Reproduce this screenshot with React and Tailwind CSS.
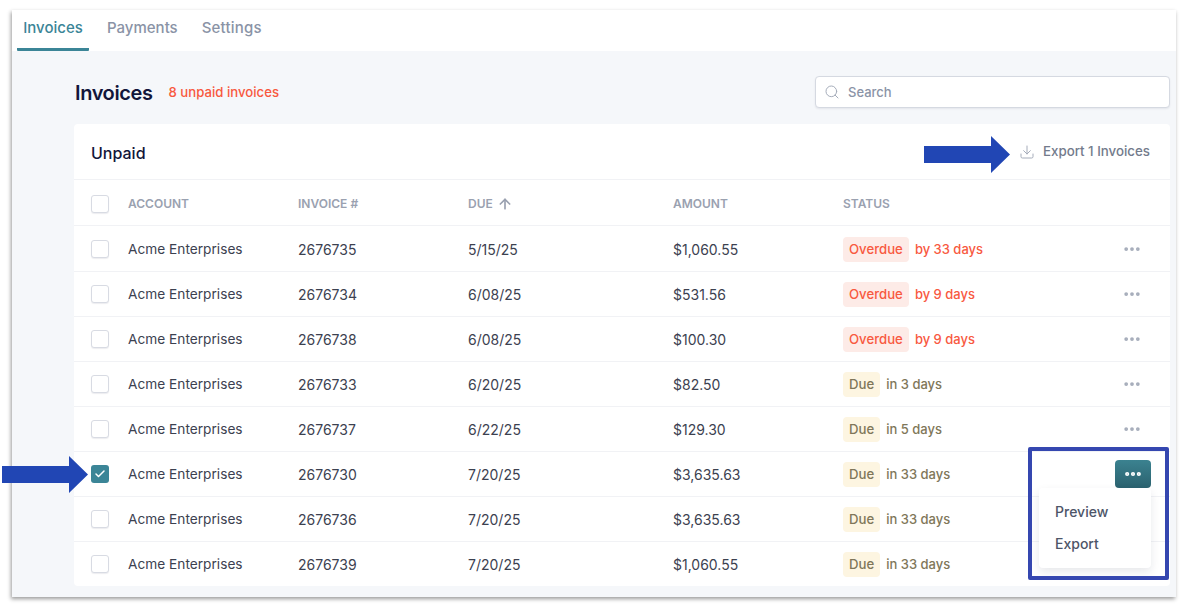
import React from 'react';
import { ArrowUp, Check, Download, MoreHorizontal, Search } from 'lucide-react';

const rows = [
  { id: '2676735', due: '5/15/25', amount: '$1,060.55', status: 'Overdue', note: 'by 33 days', height: 'h-[46px] pt-[1px]' },
  { id: '2676734', due: '6/08/25', amount: '$531.56', status: 'Overdue', note: 'by 9 days' },
  { id: '2676738', due: '6/08/25', amount: '$100.30', status: 'Overdue', note: 'by 9 days' },
  { id: '2676733', due: '6/20/25', amount: '$82.50', status: 'Due', note: 'in 3 days' },
  { id: '2676737', due: '6/22/25', amount: '$129.30', status: 'Due', note: 'in 5 days' },
  { id: '2676730', due: '7/20/25', amount: '$3,635.63', status: 'Due', note: 'in 33 days', checked: true, open: true },
  { id: '2676736', due: '7/20/25', amount: '$3,635.63', status: 'Due', note: 'in 33 days', hideDots: true },
  { id: '2676739', due: '7/20/25', amount: '$1,060.55', status: 'Due', note: 'in 33 days', hideDots: true, height: 'h-[44px]' },
];

function Checkbox({ checked }) {
  if (checked) {
    return (
      <span className="flex h-[18px] w-[18px] items-center justify-center rounded-[3px] bg-[#3b8597]">
        <Check size={12} strokeWidth={3} className="text-white" />
      </span>
    );
  }
  return <span className="block h-[18px] w-[18px] rounded-[3px] border border-[#d8dbe3] bg-white shadow-[0_1px_1px_rgba(20,30,60,0.08)]"></span>;
}

function Arrow({ className }) {
  return (
    <svg className={className} width="86" height="37" viewBox="0 0 86 37">
      <path d="M0 10H67V0L86 18.5L67 37V27H0Z" fill="#2146b4" />
    </svg>
  );
}

export default function App() {
  return (
    <div className="relative h-[613px] w-[1199px] overflow-hidden bg-white font-['Inter',sans-serif] text-[14px]">
      <div className="ml-3 mt-[10px] h-[587px] w-[1164px] bg-[#f5f7fa] shadow-[-1px_2px_4px_rgba(0,0,0,0.4)]">
        {/* Tabs */}
        <div className="flex h-[41px] gap-[24px] bg-white pl-[5px] text-[15px] font-medium text-[#8a93a6]">
          <div className="flex w-[72px] justify-center rounded-b-[1px] border-b-[3px] border-[#3b8597] pt-[7px] text-[#3b8597]">Invoices</div>
          <div className="-ml-[6px] pt-[7px]">Payments</div>
          <div className="pt-[7px] tracking-[0.2px]">Settings</div>
        </div>

        <div className="pl-[62px] pr-[6px]">
          {/* Title row */}
          <div className="flex h-[73px] items-center justify-between pt-[9px]">
            <div className="flex items-center gap-[16px] pl-[1px] pt-[2px]">
              <h1 className="text-[20px] font-semibold tracking-[-0.4px] text-[#12163a]">Invoices</h1>
              <span className="text-[13.2px] font-medium text-[#f8593f]">8 unpaid invoices</span>
            </div>
            <div className="flex h-[32px] w-[355px] items-center gap-[8px] rounded-[4px] border border-[#d5d9e1] bg-white pl-[8px] text-[13px] font-medium text-[#8a93a6] shadow-[0_1px_2px_rgba(20,30,60,0.08)]">
              <Search size={16} strokeWidth={1.5} className="text-[#a5acba]" />
              <span className="pt-[2px]">Search</span>
            </div>
          </div>

          {/* Card */}
          <div className="h-[462px] rounded-[4px] bg-white">
            <div className="flex h-[56px] items-center justify-between border-b border-[#f1f2f5] pl-[17px] pr-[20px]">
              <h2 className="pt-[2px] text-[16px] font-medium text-[#12163a]">Unpaid</h2>
              <div className="flex items-center gap-[8px] text-[13.3px] font-medium text-[#737b8c]">
                <Download size={16} strokeWidth={1.5} className="text-[#a5acba]" />
                Export 1 Invoices
              </div>
            </div>

            <div className="grid h-[46px] grid-cols-[37px_170px_170px_205px_170px_1fr] items-center border-b border-[#f1f2f5] pl-[17px] pt-[2px] text-[12px] font-semibold text-[#9aa1b0]">
              <Checkbox />
              <div>ACCOUNT</div>
              <div>INVOICE #</div>
              <div className="flex items-center gap-[4px]">DUE <ArrowUp size={16} strokeWidth={2.5} /></div>
              <div>AMOUNT</div>
              <div>STATUS</div>
            </div>

            {rows.map((row, i) => (
              <div key={row.id} className={`relative grid grid-cols-[37px_170px_170px_205px_170px_1fr] items-center pl-[17px] text-[#3c4150] ${row.height || 'h-[45px]'} ${i < rows.length - 1 ? 'border-b border-[#f1f2f5]' : ''}`}>
                <Checkbox checked={row.checked} />
                <div className="text-[13.7px]">Acme Enterprises</div>
                <div>{row.id}</div>
                <div>{row.due}</div>
                <div>{row.amount}</div>
                <div className="flex items-center justify-between pr-[28px]">
                  <div className="flex items-center gap-[6px] pt-[1px] text-[13px] font-medium">
                    {row.status === 'Overdue' ? (
                      <>
                        <span className="rounded-[4px] bg-[#fdebe7] px-[6px] py-[3px] text-[13.2px] text-[#f8593f]">Overdue</span>
                        <span className="text-[#f8593f]">{row.note}</span>
                      </>
                    ) : (
                      <>
                        <span className="rounded-[4px] bg-[#fdf5e1] px-[6px] py-[3px] text-[13.2px] text-[#7f7759]">Due</span>
                        <span className="text-[#7f7759]">{row.note}</span>
                      </>
                    )}
                  </div>
                  {!row.open && !row.hideDots && <MoreHorizontal size={20} strokeWidth={2.5} className="text-[#a5acba]" />}
                </div>
              </div>
            ))}
          </div>
        </div>
      </div>

      {/* Row menu */}
      <div className="absolute left-[1115px] top-[460px] flex h-[28px] w-[36px] items-center justify-center rounded-[4px] bg-gradient-to-b from-[#3b8290] to-[#2b626f] text-white">
        <MoreHorizontal size={20} strokeWidth={3} />
      </div>
      <div className="absolute left-[1039px] top-[488px] h-[80px] w-[112px] rounded-[4px] bg-white pl-[16px] pt-[13px] text-[14px] font-medium text-[#4d5568] shadow-[0_4px_10px_rgba(20,30,60,0.1)]">
        <div>Preview</div>
        <div className="mt-[11px]">Export</div>
      </div>

      {/* Annotations */}
      <div className="absolute left-[1028px] top-[447px] h-[133px] w-[141px] rounded-[2px] border-[4px] border-[#3547b0]"></div>
      <Arrow className="absolute left-[2px] top-[456px]" />
      <Arrow className="absolute left-[924px] top-[136px]" />
    </div>
  );
}
